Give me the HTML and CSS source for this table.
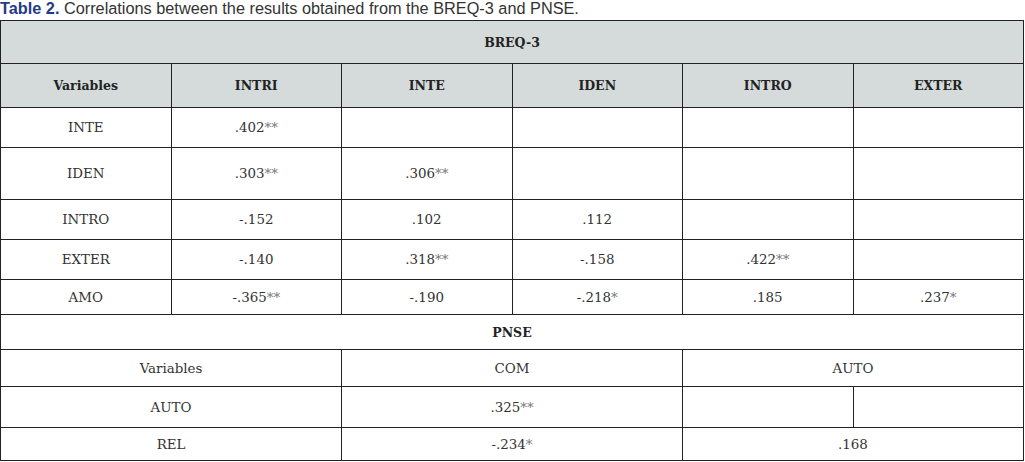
FILE: index.html
```html
<!DOCTYPE html>
<html>
<head>
<meta charset="utf-8">
<link rel="stylesheet" href="styles.css">
</head>
<body>
<div class="caption"><span class="label">Table 2.</span> Correlations between the results obtained from the BREQ-3 and PNSE.</div>
<table class="corr">
<colgroup><col><col><col><col><col><col></colgroup>
<tr class="head h1"><th colspan="6">BREQ-3</th></tr>
<tr class="head h2"><th>Variables</th><th>INTRI</th><th>INTE</th><th>IDEN</th><th>INTRO</th><th>EXTER</th></tr>
<tr class="r40"><td>INTE</td><td>.402<span class="st">**</span></td><td></td><td></td><td></td><td></td></tr>
<tr class="r52"><td>IDEN</td><td>.303<span class="st">**</span></td><td>.306<span class="st">**</span></td><td></td><td></td><td></td></tr>
<tr class="r40"><td>INTRO</td><td>-.152</td><td>.102</td><td>.112</td><td></td><td></td></tr>
<tr class="r40"><td>EXTER</td><td>-.140</td><td>.318<span class="st">**</span></td><td>-.158</td><td>.422<span class="st">**</span></td><td></td></tr>
<tr class="r35"><td>AMO</td><td>-.365<span class="st">**</span></td><td>-.190</td><td>-.218<span class="st">*</span></td><td>.185</td><td>.237<span class="st">*</span></td></tr>
<tr class="r35 sub"><th colspan="6">PNSE</th></tr>
<tr class="r37"><td colspan="2">Variables</td><td colspan="2">COM</td><td colspan="2">AUTO</td></tr>
<tr class="r41"><td colspan="2">AUTO</td><td colspan="2">.325<span class="st">**</span></td><td></td><td></td></tr>
<tr class="r34"><td colspan="2">REL</td><td colspan="2">-.234<span class="st">*</span></td><td colspan="2">.168</td></tr>
</table>
</body>
</html>
```
FILE: styles.css
```css
html, body {
  margin: 0;
  padding: 0;
  background: #ffffff;
}
.caption {
  height: 20px;
  line-height: 16px;
  font-family: "Liberation Sans", Arial, sans-serif;
  font-size: 16.3px;
  color: #333333;
  white-space: nowrap;
}
.caption .label {
  color: #1f3c88;
  font-weight: bold;
}
.corr {
  border-collapse: collapse;
  table-layout: fixed;
  width: 1024px;
  font-family: "DejaVu Serif", serif;
  font-size: 13.4px;
  color: #333333;
}
.corr col {
  width: 16.666%;
}
.corr td, .corr th {
  border: 1px solid #222222;
  text-align: center;
  vertical-align: middle;
  padding: 0;
}
.corr th {
  font-weight: bold;
  font-size: 12.5px;
  color: #222222;
}
.head th {
  background: #d5dbdb;
}
.h1 th { height: 42px; }
.h2 th { height: 43px; }
.r40 td { height: 39px; }
.r52 td { height: 51px; }
.r35 td, .r35 th { height: 34px; }
.r37 td { height: 36px; }
.r41 td { height: 40px; }
.r34 td { height: 32px; }
.st {
  color: #777777;
}
```
